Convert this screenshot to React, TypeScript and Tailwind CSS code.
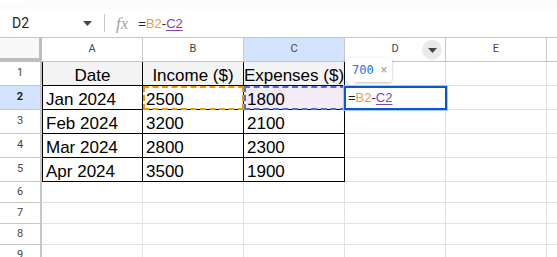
import React from 'react';

const cols = ['A', 'B', 'C', 'D', 'E', ''];

const data: string[][] = [
  ['Date', 'Income ($)', 'Expenses ($)'],
  ['Jan 2024', '2500', '1800'],
  ['Feb 2024', '3200', '2100'],
  ['Mar 2024', '2800', '2300'],
  ['Apr 2024', '3500', '1900'],
];

function Formula({ size }: { size: string }) {
  return (
    <span className={`${size} text-[#1f1f1f] whitespace-nowrap`}>
      =<span className="text-[#f29c38]">B2</span>-
      <span className="text-[#7e45b8] underline underline-offset-2">C2</span>
    </span>
  );
}

function FormulaBar() {
  return (
    <div className="h-[29px] flex items-center border-b border-[#c4c7c5] bg-white">
      <div className="w-[104px] flex items-center pl-[12px] pr-[12px]">
        <span className="text-[14px] text-[#1f1f1f] font-['Roboto',sans-serif]">D2</span>
        <svg className="ml-auto" width="9" height="5" viewBox="0 0 9 5">
          <path d="M0 0h9L4.5 5z" fill="#444746" />
        </svg>
      </div>
      <div className="w-px h-[18px] bg-[#c4c7c5]" />
      <span className="ml-[11px] text-[17px] italic text-[#a0a4a8] font-['Liberation_Serif',serif] leading-none">
        fx
      </span>
      <span className="ml-[10px] font-['Liberation_Sans',Arial,sans-serif]">
        <Formula size="text-[13px]" />
      </span>
    </div>
  );
}

function ColumnHeader() {
  return (
    <div className="flex h-[24px]">
      <div className="w-[42px] shrink-0 bg-[#f8f9fa] border-r-[3px] border-b-[4px] border-[#bdbdbd]" />
      {cols.map((c, i) => (
        <div
          key={i}
          className={`relative w-[101px] shrink-0 flex items-center justify-center border-r border-b border-[#c4c7c5] text-[11px] text-[#444746] font-['Roboto',sans-serif] ${
            c === 'C' ? 'bg-[#d3e3fd]' : 'bg-white'
          }`}
        >
          {c}
          {c === 'D' && (
            <div className="absolute left-[77px] top-[2px] w-[20px] h-[20px] rounded-full bg-[#e9eaed] flex items-center justify-center">
              <svg width="9" height="5" viewBox="0 0 9 5">
                <path d="M0 0h9L4.5 5z" fill="#444746" />
              </svg>
            </div>
          )}
        </div>
      ))}
    </div>
  );
}

function Cell({ r, c, text }: { r: number; c: number; text: string }) {
  const inTable = r < 5 && c < 3;
  const border = inTable ? 'border-black' : 'border-[#e2e2e3]';
  const left = inTable && c === 0 ? 'border-l' : '';
  const head = r === 0 && c < 3;
  const bg = head ? 'bg-[#f3f3f3]' : r === 1 && c === 2 ? 'bg-[#f3ecf7]' : 'bg-white';

  return (
    <div
      className={`relative w-[101px] shrink-0 flex items-end border-r border-b ${left} ${border} ${bg} ${
        head ? 'justify-center' : 'pl-[3px]'
      }`}
    >
      {text && (
        <span className="text-[17px] leading-[19px] text-black whitespace-nowrap">{text}</span>
      )}
      {r === 1 && c === 1 && (
        <div className="absolute left-0 top-0 w-[101px] h-[24px] border-2 border-dashed border-[#f29900]" />
      )}
      {r === 1 && c === 2 && (
        <div className="absolute left-0 top-0 w-[102px] h-[24px] border-2 border-dashed border-[#4a6fe0]" />
      )}
      {r === 0 && c === 3 && (
        <div className="absolute left-0 -top-[4px] w-[47px] h-[24px] bg-white rounded-[3px] shadow-[0_1px_3px_rgba(60,64,67,0.35)] flex items-center pl-[7px] z-10">
          <span className="text-[12px] text-[#1a73e8] font-['DejaVu_Sans_Mono',monospace]">700</span>
          <span className="ml-[7px] text-[12px] text-[#a0a4a8] font-['Roboto',sans-serif]">×</span>
          <div className="absolute left-[4px] -bottom-[3px] w-[6px] h-[6px] bg-white rotate-45" />
        </div>
      )}
      {r === 1 && c === 3 && (
        <div className="absolute -left-[2px] -top-[1px] w-[105px] h-[26px] border border-[#a8c7fa] z-20">
          <div className="w-full h-full border-2 border-[#0b57d0] bg-white flex items-center pl-[2px]">
            <Formula size="text-[13px]" />
          </div>
        </div>
      )}
    </div>
  );
}

function Grid() {
  const rows = Array.from({ length: 9 }, (_, i) => i);
  return (
    <div className="font-['Liberation_Sans',Arial,sans-serif]">
      {rows.map((r) => (
        <div key={r} className={`flex ${r < 5 ? 'h-[24px]' : 'h-[21px]'}`}>
          <div
            className={`w-[42px] shrink-0 flex items-center justify-center border-r-2 border-b border-[#c4c7c5] text-[11px] font-['Roboto',sans-serif] ${
              r === 1 ? 'bg-[#d3e3fd] font-bold text-[#1f1f1f]' : 'bg-white text-[#444746]'
            }`}
          >
            {r + 1}
          </div>
          {cols.map((_, c) => (
            <Cell key={c} r={r} c={c} text={r < 5 && c < 3 ? data[r][c] : ''} />
          ))}
        </div>
      ))}
    </div>
  );
}

export default function App() {
  return (
    <div className="w-[557px] h-[257px] overflow-hidden bg-white">
      <div className="h-[9px] bg-[#f9fbfd] flex">
        <div className="w-[25px] h-[3px] bg-white rounded-br-[4px]" />
      </div>
      <FormulaBar />
      <ColumnHeader />
      <Grid />
    </div>
  );
}
